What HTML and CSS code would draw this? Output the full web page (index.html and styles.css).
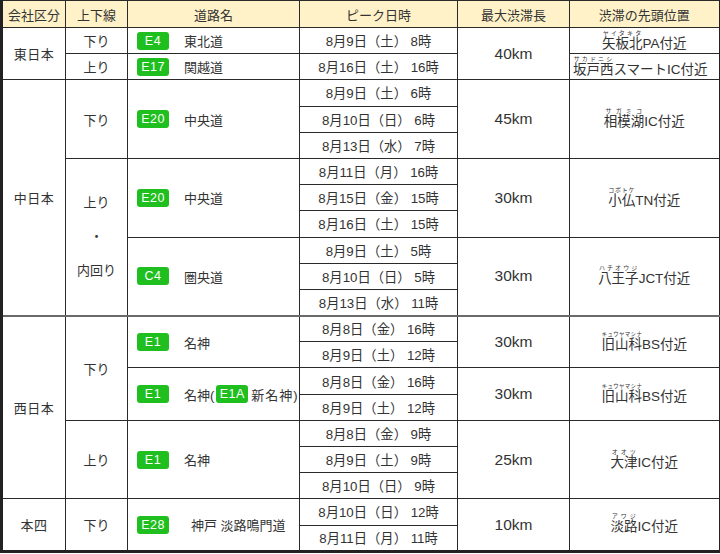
FILE: index.html
```html
<!DOCTYPE html>
<html lang="ja">
<head>
<meta charset="utf-8">
<title>渋滞予測</title>
<link rel="stylesheet" href="styles.css">
</head>
<body>
<table class="jam">
  <colgroup>
    <col class="w-co"><col class="w-dir"><col class="w-road"><col class="w-dt"><col class="w-km"><col class="w-loc">
  </colgroup>
  <thead>
    <tr><th>会社区分</th><th>上下線</th><th>道路名</th><th>ピーク日時</th><th>最大渋滞長</th><th>渋滞の先頭位置</th></tr>
  </thead>
  <tbody>
    <tr>
      <td rowspan="2" class="co">東日本</td>
      <td class="dir">下り</td>
      <td class="road"><div class="rd"><span class="badge">E4</span><span class="rn">東北道</span></div></td>
      <td class="dt">8月9日（土） 8時</td>
      <td rowspan="2" class="km">40km</td>
      <td class="loc"><ruby>矢板北<rt>ヤイタキタ</rt></ruby>PA付近</td>
    </tr>
    <tr>
      <td class="dir">上り</td>
      <td class="road"><div class="rd"><span class="badge">E17</span><span class="rn">関越道</span></div></td>
      <td class="dt">8月16日（土） 16時</td>
      <td class="loc shift"><ruby>坂戸西<rt>サカドニシ</rt></ruby>スマートIC付近</td>
    </tr>

    <tr>
      <td rowspan="9" class="co">中日本</td>
      <td rowspan="3" class="dir">下り</td>
      <td rowspan="3" class="road"><div class="rd"><span class="badge">E20</span><span class="rn">中央道</span></div></td>
      <td class="dt">8月9日（土） 6時</td>
      <td rowspan="3" class="km">45km</td>
      <td rowspan="3" class="loc"><ruby>相模湖<rt>サガミコ</rt></ruby>IC付近</td>
    </tr>
    <tr><td class="dt">8月10日（日） 6時</td></tr>
    <tr><td class="dt">8月13日（水） 7時</td></tr>
    <tr>
      <td rowspan="6" class="dir multi"><span>上り</span><span>・</span><span>内回り</span></td>
      <td rowspan="3" class="road"><div class="rd"><span class="badge">E20</span><span class="rn">中央道</span></div></td>
      <td class="dt">8月11日（月） 16時</td>
      <td rowspan="3" class="km">30km</td>
      <td rowspan="3" class="loc"><ruby>小仏<rt>コボトケ</rt></ruby>TN付近</td>
    </tr>
    <tr><td class="dt">8月15日（金） 15時</td></tr>
    <tr><td class="dt">8月16日（土） 15時</td></tr>
    <tr>
      <td rowspan="3" class="road"><div class="rd"><span class="badge">C4</span><span class="rn">圏央道</span></div></td>
      <td class="dt">8月9日（土） 5時</td>
      <td rowspan="3" class="km">30km</td>
      <td rowspan="3" class="loc"><ruby>八王子<rt>ハチオウジ</rt></ruby>JCT付近</td>
    </tr>
    <tr><td class="dt">8月10日（日） 5時</td></tr>
    <tr><td class="dt">8月13日（水） 11時</td></tr>

    <tr class="grp">
      <td rowspan="7" class="co">西日本</td>
      <td rowspan="4" class="dir">下り</td>
      <td rowspan="2" class="road"><div class="rd"><span class="badge">E1</span><span class="rn">名神</span></div></td>
      <td class="dt">8月8日（金） 16時</td>
      <td rowspan="2" class="km">30km</td>
      <td rowspan="2" class="loc"><ruby>旧山科<rt class="tight">キュウヤマシナ</rt></ruby>BS付近</td>
    </tr>
    <tr><td class="dt">8月9日（土） 12時</td></tr>
    <tr>
      <td rowspan="2" class="road"><div class="rd"><span class="badge">E1</span><span class="rn">名神(</span><span class="badge sub">E1A</span><span class="rn2">新名神)</span></div></td>
      <td class="dt">8月8日（金） 16時</td>
      <td rowspan="2" class="km">30km</td>
      <td rowspan="2" class="loc"><ruby>旧山科<rt class="tight">キュウヤマシナ</rt></ruby>BS付近</td>
    </tr>
    <tr><td class="dt">8月9日（土） 12時</td></tr>
    <tr>
      <td rowspan="3" class="dir">上り</td>
      <td rowspan="3" class="road"><div class="rd"><span class="badge">E1</span><span class="rn">名神</span></div></td>
      <td class="dt">8月8日（金） 9時</td>
      <td rowspan="3" class="km">25km</td>
      <td rowspan="3" class="loc"><ruby>大津<rt>オオツ</rt></ruby>IC付近</td>
    </tr>
    <tr><td class="dt">8月9日（土） 9時</td></tr>
    <tr><td class="dt">8月10日（日） 9時</td></tr>

    <tr>
      <td rowspan="2" class="co">本四</td>
      <td rowspan="2" class="dir">下り</td>
      <td rowspan="2" class="road"><div class="rd"><span class="badge">E28</span><span class="rn wide">神戸 淡路鳴門道</span></div></td>
      <td class="dt">8月10日（日） 12時</td>
      <td rowspan="2" class="km">10km</td>
      <td rowspan="2" class="loc"><ruby>淡路<rt>アワジ</rt></ruby>IC付近</td>
    </tr>
    <tr><td class="dt">8月11日（月） 11時</td></tr>
  </tbody>
</table>
</body>
</html>
```

FILE: styles.css
```css
html, body {
  margin: 0;
  padding: 0;
  background: #ffffff;
}

body {
  font-family: "Liberation Sans", "Noto Sans CJK JP", sans-serif;
  font-size: 13px;
  color: #333333;
}

.jam {
  border-collapse: collapse;
  table-layout: fixed;
  width: 718px;
  border-top: 1px solid #333;
  border-left: 3px solid #222;
  border-right: 2px solid #222;
  border-bottom: 3px solid #222;
}

.w-co { width: 64px; }
.w-dir { width: 62px; }
.w-road { width: 172px; }
.w-dt { width: 158px; }
.w-km { width: 112px; }
.w-loc { width: 150px; }

.jam th,
.jam td {
  border: 1px solid #2a2a2a;
  padding: 0;
  text-align: center;
  vertical-align: middle;
  white-space: nowrap;
  overflow: visible;
}

.jam th {
  height: 26px;
  background: #fff2c8;
  font-weight: normal;
  color: #333;
}

.jam tbody tr {
  height: 26.2px;
}

.jam tr.grp td {
  border-top: 2px solid #6a6a6a;
}

.co {
  letter-spacing: 0.5px;
}

.dt {
  font-size: 13.3px;
}

.km {
  font-size: 15.5px;
}

.multi span {
  display: block;
  line-height: 34px;
}

.jam td.road {
  text-align: left;
  padding-left: 9px;
}

.rd {
  display: flex;
  align-items: center;
}

.badge {
  display: inline-block;
  width: 32px;
  height: 18px;
  line-height: 18px;
  border-radius: 3px;
  background: #1ebf1e;
  color: #ffffff;
  font-size: 12.5px;
  text-align: center;
  letter-spacing: 0.5px;
}

.rn {
  margin-left: 15px;
}

.rn.wide {
  margin-left: 22px;
}

.badge.sub {
  margin-left: 2px;
  margin-right: 3px;
}

.rn2 {
  letter-spacing: 1px;
}

.loc {
  font-size: 13.5px;
  line-height: 1.2;
}

.jam td.loc.shift {
  padding-right: 8px;
}

.loc ruby {
  ruby-position: over;
}

.loc rt {
  font-size: 6px;
  letter-spacing: 0.5px;
  line-height: 1.8;
  color: #333;
}

.loc rt.tight {
  font-size: 5.4px;
  letter-spacing: 0;
}
```
